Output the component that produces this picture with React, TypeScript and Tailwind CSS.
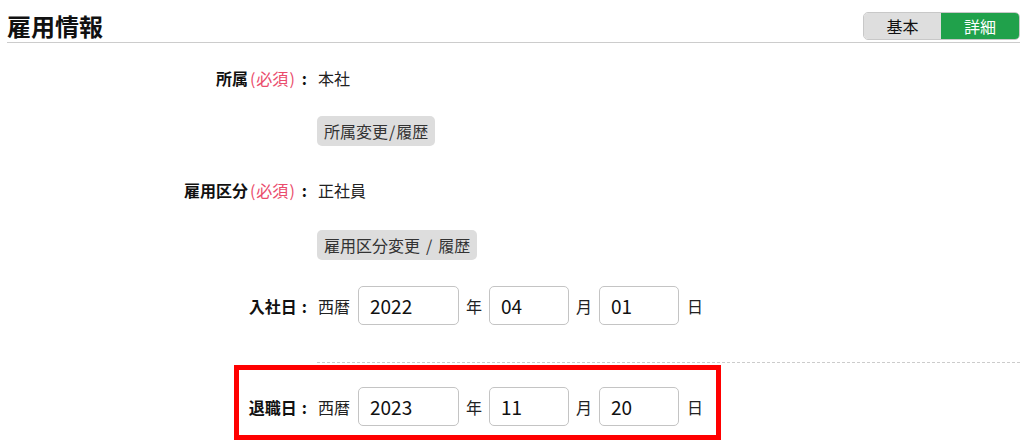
import React from "react";

const font = "font-['Noto_Sans_CJK_JP','Noto_Sans',sans-serif]";

function Label({ text, required }: { text: string; required?: boolean }) {
  return (
    <div className="w-[307px] shrink-0 text-right text-[16px] leading-[24px] font-bold text-[#111]">
      {text}
      {required && (
        <span className="font-normal text-[#ea4c6c]">
          <span className="pl-[2px] pr-[1px]">(</span>必須<span className="pl-[1px] pr-[2px]">)</span>
        </span>
      )}
      <span className="ml-[5px]">:</span>
    </div>
  );
}

function DateInput({ value, wide }: { value: string; wide?: boolean }) {
  return (
    <input
      defaultValue={value}
      className={`${wide ? "w-[101px]" : "w-[80px]"} h-[39px] rounded-[5px] border border-[#c4c4c4] bg-white pl-[11px] text-[19px] text-[#111] outline-none`}
    />
  );
}

function DateRow({ y, m, d }: { y: string; m: string; d: string }) {
  return (
    <div className="flex items-center gap-[7px] text-[16px] leading-[24px] text-[#222]">
      <span className="mr-[1px]">西暦</span>
      <DateInput value={y} wide />
      <span>年</span>
      <DateInput value={m} />
      <span>月</span>
      <DateInput value={d} />
      <span className="ml-[1px]">日</span>
    </div>
  );
}

function SmallButton({ children }: { children: React.ReactNode }) {
  return (
    <button className="h-[30px] rounded-[5px] bg-[#dddddd] px-[7px] text-[16px] leading-[30px] text-[#333]">
      {children}
    </button>
  );
}

export default function App() {
  return (
    <div className={`w-[1033px] h-[445px] overflow-hidden bg-white ${font}`}>
      {/* Header */}
      <div className="ml-[7px] mr-[13px] flex items-end justify-between border-b border-[#cccccc] pt-[12px] pb-[2px]">
        <h2 className="text-[24px] font-bold leading-[28px] text-[#111]">雇用情報</h2>
        <div className="flex h-[28px] overflow-hidden rounded-[5px] border border-[#c8c8c8] text-[16px]">
          <button className="w-[77px] bg-[#dedede] text-[#111]">基本</button>
          <button className="w-[78px] bg-[#20a14b] text-white">詳細</button>
        </div>
      </div>

      {/* 所属 */}
      <div className="mt-[23px] flex gap-[11px]">
        <Label text="所属" required />
        <div className="text-[16px] leading-[24px] text-[#222]">本社</div>
      </div>
      <div className="mt-[26px] pl-[317px]">
        <SmallButton>
          所属変更<span className="px-[1px]">/</span>履歴
        </SmallButton>
      </div>

      {/* 雇用区分 */}
      <div className="mt-[32px] flex gap-[11px]">
        <Label text="雇用区分" required />
        <div className="text-[16px] leading-[24px] text-[#222]">正社員</div>
      </div>
      <div className="mt-[28px] pl-[317px]">
        <SmallButton>
          雇用区分変更<span className="px-[6px]">/</span>履歴
        </SmallButton>
      </div>

      {/* 入社日 */}
      <div className="mt-[26px] flex items-center gap-[11px]">
        <Label text="入社日" />
        <DateRow y="2022" m="04" d="01" />
      </div>

      <div className="ml-[317px] mr-[13px] mt-[37px] border-t border-dashed border-[#cccccc]" />

      {/* 退職日 */}
      <div className="relative mt-[24px] flex items-center gap-[11px]">
        <Label text="退職日" />
        <DateRow y="2023" m="11" d="20" />
        <div className="pointer-events-none absolute left-[234px] top-[-22px] h-[75px] w-[487px] border-[5px] border-[#ff0000]" />
      </div>
    </div>
  );
}
